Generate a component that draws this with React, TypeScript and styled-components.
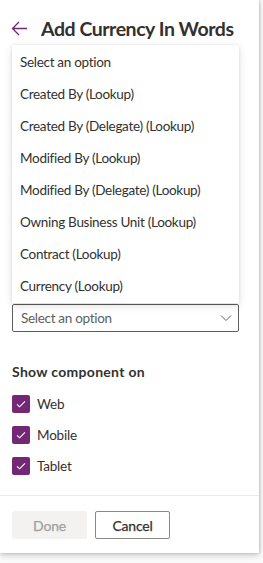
import React from "react";
import styled, { createGlobalStyle } from "styled-components";

const GlobalStyle = createGlobalStyle`
  html, body {
    margin: 0;
    padding: 0;
    background: #ebebeb;
    font-family: "Segoe UI", Lato, "Noto Sans", sans-serif;
    color: #323130;
  }
`;

const Page = styled.div`
  width: 263px;
  height: 563px;
  overflow: hidden;
  background: #fafafa;
`;

const Panel = styled.div`
  position: relative;
  width: 259px;
  height: 553px;
  background: #ffffff;
  box-shadow: 0 2px 6px rgba(0, 0, 0, 0.22), 1px 0 2px rgba(0, 0, 0, 0.12);
  display: flex;
  flex-direction: column;
`;

const Header = styled.div`
  display: flex;
  align-items: center;
  gap: 13px;
  height: 56px;
  padding: 0 12px 0 11px;
  box-sizing: border-box;
`;

const BackButton = styled.button`
  border: 0;
  background: none;
  padding: 0;
  width: 17px;
  height: 17px;
  display: flex;
  color: #742774;
  cursor: pointer;
`;

const Title = styled.h1`
  margin: 0;
  font-size: 19.5px;
  font-weight: 700;
  letter-spacing: -0.45px;
  color: #323130;
  white-space: nowrap;
`;

const Body = styled.div`
  flex: 1;
  padding: 0 20px 0 12px;
  display: flex;
  flex-direction: column;
`;

const Field = styled.div`
  position: relative;
  margin-top: 248px;
`;

const SelectBox = styled.div`
  height: 28px;
  border: 1px solid #605e5c;
  border-radius: 2px;
  box-sizing: border-box;
  display: flex;
  align-items: center;
  justify-content: space-between;
  padding: 0 6px 0 8px;
  font-size: 13.5px;
  letter-spacing: -0.3px;
  color: #605e5c;
`;

const Menu = styled.ul`
  position: absolute;
  left: 0;
  right: 0;
  bottom: 100%;
  margin: 0 0 1px;
  padding: 1px 0;
  list-style: none;
  background: #ffffff;
  box-shadow: 0 3px 8px rgba(0, 0, 0, 0.13), 0 0 3px rgba(0, 0, 0, 0.09);
  border-radius: 2px;
`;

const MenuItem = styled.li`
  height: 32px;
  line-height: 32px;
  padding: 0 8px;
  font-size: 13.5px;
  letter-spacing: -0.3px;
  color: #323130;
  white-space: nowrap;
`;

const SectionTitle = styled.div`
  margin-top: 31px;
  font-size: 14px;
  font-weight: 700;
  letter-spacing: 0.3px;
  color: #323130;
`;

const CheckList = styled.div`
  display: flex;
  flex-direction: column;
  gap: 13px;
  margin-top: 15px;
`;

const CheckRow = styled.label`
  display: flex;
  align-items: center;
  gap: 7px;
  font-size: 13.5px;
  letter-spacing: -0.2px;
  color: #323130;
`;

const CheckBox = styled.span`
  width: 18px;
  height: 18px;
  border-radius: 2px;
  background: #742774;
  display: flex;
  align-items: center;
  justify-content: center;
`;

const Footer = styled.div`
  border-top: 1px solid #edebe9;
  padding: 15px 12px 14px;
  display: flex;
  gap: 8px;
`;

const Button = styled.button<{ $disabled?: boolean }>`
  width: 75px;
  height: 28px;
  border-radius: 2px;
  font-family: inherit;
  font-size: 14px;
  font-weight: 400;
  letter-spacing: -0.2px;
  border: 1px solid ${(p) => (p.$disabled ? "#f3f2f1" : "#8a8886")};
  background: ${(p) => (p.$disabled ? "#f3f2f1" : "#ffffff")};
  color: ${(p) => (p.$disabled ? "#a19f9d" : "#323130")};
  padding: 0;
  -webkit-text-stroke: 0.25px currentColor;
`;

const options = [
  "Select an option",
  "Created By (Lookup)",
  "Created By (Delegate) (Lookup)",
  "Modified By (Lookup)",
  "Modified By (Delegate) (Lookup)",
  "Owning Business Unit (Lookup)",
  "Contract (Lookup)",
  "Currency (Lookup)",
];

const devices = ["Web", "Mobile", "Tablet"];

const Check = () => (
  <svg width="12" height="12" viewBox="0 0 12 12">
    <path d="M2 6.3l2.6 2.5L10 3.4" fill="none" stroke="#fff" strokeWidth="1.1" />
  </svg>
);

const App = () => (
  <Page>
    <GlobalStyle />
    <Panel>
      <Header>
        <BackButton aria-label="Back">
          <svg width="17" height="17" viewBox="0 0 17 17">
            <path d="M16 8.5H1.6M8 2L1.5 8.5 8 15" fill="none" stroke="currentColor" strokeWidth="1.3" />
          </svg>
        </BackButton>
        <Title>Add Currency In Words</Title>
      </Header>
      <Body>
        <Field>
          <Menu>
            {options.map((o) => (
              <MenuItem key={o}>{o}</MenuItem>
            ))}
          </Menu>
          <SelectBox>
            <span>Select an option</span>
            <svg width="12" height="8" viewBox="0 0 12 8">
              <path d="M1 1.5l5 5 5-5" fill="none" stroke="#605e5c" strokeWidth="1" />
            </svg>
          </SelectBox>
        </Field>
        <SectionTitle>Show component on</SectionTitle>
        <CheckList>
          {devices.map((d) => (
            <CheckRow key={d}>
              <CheckBox>
                <Check />
              </CheckBox>
              {d}
            </CheckRow>
          ))}
        </CheckList>
      </Body>
      <Footer>
        <Button $disabled>Done</Button>
        <Button>Cancel</Button>
      </Footer>
    </Panel>
  </Page>
);

export default App;
